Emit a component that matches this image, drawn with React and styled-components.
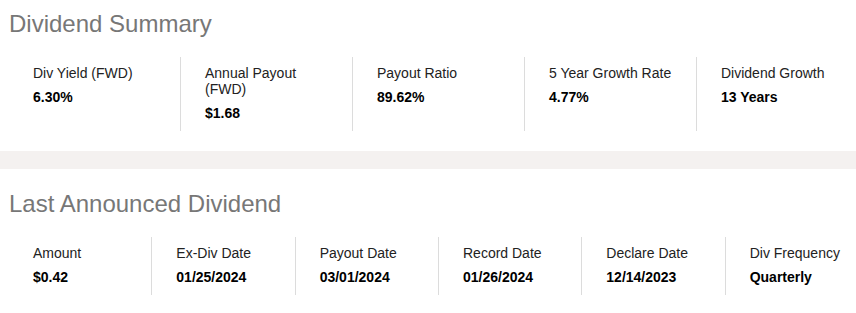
import React from 'react';
import styled, { createGlobalStyle } from 'styled-components';

const GlobalStyle = createGlobalStyle`
	html, body {
		margin: 0;
		padding: 0;
		background: #ffffff;
		overflow: hidden;
	}
	body {
		font-family: "Liberation Sans", Arial, sans-serif;
	}
`;

const Page = styled.div`
	width: 856px;
	overflow: hidden;
`;

const Section = styled.section`
	padding: ${props => props.top}px 0 ${props => props.bottom}px 8px;
`;

const Title = styled.h2`
	margin: 0;
	padding-left: 1px;
	font-size: 24px;
	line-height: 28px;
	font-weight: normal;
	color: #777777;
`;

const Row = styled.div`
	display: grid;
	grid-template-columns: repeat(${props => props.cols}, 1fr);
	width: 860px;
	margin-top: 19px;
`;

const Cell = styled.div`
	border-left: 1px solid #dcdcdc;
	padding: 8px 12px 10px 24px;
	&:first-child {
		border-left-color: transparent;
	}
`;

const Label = styled.div`
	font-size: 14px;
	line-height: 16px;
	color: #222222;
`;

const Value = styled.div`
	margin-top: 8px;
	font-size: 14px;
	line-height: 16px;
	font-weight: bold;
	color: #000000;
`;

const Band = styled.div`
	height: 18px;
	background: #f4f1f0;
`;

const summary = [
	['Div Yield (FWD)', '6.30%'],
	['Annual Payout (FWD)', '$1.68'],
	['Payout Ratio', '89.62%'],
	['5 Year Growth Rate', '4.77%'],
	['Dividend Growth', '13 Years'],
];

const announced = [
	['Amount', '$0.42'],
	['Ex-Div Date', '01/25/2024'],
	['Payout Date', '03/01/2024'],
	['Record Date', '01/26/2024'],
	['Declare Date', '12/14/2023'],
	['Div Frequency', 'Quarterly'],
];

const Stats = ({ items }) => (
	<Row cols={items.length}>
		{items.map(([label, value]) => (
			<Cell key={label}>
				<Label>{label}</Label>
				<Value>{value}</Value>
			</Cell>
		))}
	</Row>
);

const App = () => {
	return (
		<Page>
			<GlobalStyle />
			<Section top={10} bottom={20}>
				<Title>Dividend Summary</Title>
				<Stats items={summary} />
			</Section>
			<Band />
			<Section top={21} bottom={19}>
				<Title>Last Announced Dividend</Title>
				<Stats items={announced} />
			</Section>
		</Page>
	);
};

export default App;
